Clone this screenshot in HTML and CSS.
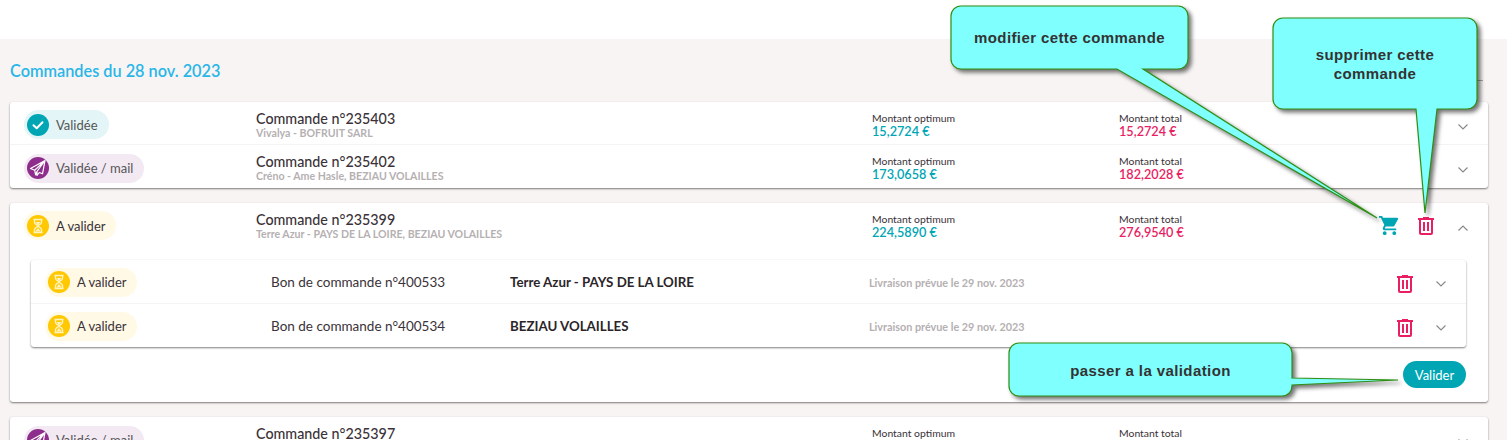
FILE: index.html
```html
<!DOCTYPE html>
<html lang="fr">
<head>
    <meta charset="UTF-8">
    <title>Commandes</title>
    <link rel="stylesheet" href="styles.css">
</head>
<body>
    <svg class="icon-defs" width="0" height="0">
        <symbol id="i-check" viewBox="0 0 22 22"><path d="M6.5 11.2l3.2 3 5.8-6" fill="none" stroke="#fff" stroke-width="2" stroke-linecap="round" stroke-linejoin="round"/></symbol>
        <symbol id="i-plane" viewBox="0 0 22 22"><path d="M18 3.5L3.5 11.5l4.2 1.7L18 3.5l-8 11v4l2.3-3 3.2 1.3L18 3.5zM7.7 13.2l.9 4.6 1.4-3.3" fill="none" stroke="#fff" stroke-width="1.2" stroke-linejoin="round"/></symbol>
        <symbol id="i-hourglass" viewBox="0 0 22 22"><path d="M6.5 4.5h9M6.5 17.5h9M7.5 5v2.5c0 2 3.5 2.5 3.5 3.5s-3.5 1.5-3.5 3.5V17M14.5 5v2.5c0 2-3.500 2.500-3.500 3.500s3.500 1.500 3.500 3.500V17" fill="none" stroke="#fff3c0" stroke-width="1.400"/><path d="M8.500 7h5l-2.500 3.200zM8.200 16.500l2.800-3.500 2.800 3.500z" fill="#fff3c0"/></symbol>
        <symbol id="i-cart" viewBox="0 0 24 24"><path d="M17,18C15.89,18 15,18.89 15,20A2,2 0 0,0 17,22A2,2 0 0,0 19,20C19,18.89 18.1,18 17,18M1,2V4H3L6.6,11.59L5.24,14.04C5.09,14.32 5,14.65 5,15A2,2 0 0,0 7,17H19V15H7.42A0.25,0.25 0 0,1 7.17,14.75C7.17,14.7 7.18,14.66 7.2,14.63L8.1,13H15.55C16.3,13 16.96,12.58 17.3,11.97L20.88,5.5C20.95,5.34 21,5.17 21,5A1,1 0 0,0 20,4H5.21L4.27,2M7,18C5.89,18 5,18.89 5,20A2,2 0 0,0 7,22A2,2 0 0,0 9,20C9,18.89 8.1,18 7,18Z"/></symbol>
        <symbol id="i-trash" viewBox="0 0 24 24"><path d="M9,3V4H4V6H5V19A2,2 0 0,0 7,21H17A2,2 0 0,0 19,19V6H20V4H15V3H9M7,6H17V19H7V6M9,8V17H11V8H9M13,8V17H15V8H13Z"/></symbol>
        <symbol id="i-down" viewBox="0 0 12 8"><path d="M1.500 1.500L6 6l4.500-4.500" fill="none" stroke="#8a8a8a" stroke-width="1.200"/></symbol>
        <symbol id="i-up" viewBox="0 0 12 8"><path d="M1.500 6.500L6 2l4.500 4.500" fill="none" stroke="#8a8a8a" stroke-width="1.200"/></symbol>
    </svg>

    <div class="topbar"></div>

    <main class="content">
        <div class="title-row">
            <h1>Commandes du 28 nov. 2023</h1>
            <div class="title-tools"></div>
        </div>

        <section class="card">
            <div class="row">
                <div class="badge badge-ok"><span class="dot"><svg><use href="#i-check"/></svg></span>Validée</div>
                <div class="order"><strong>Commande n°235403</strong><small>Vivalya - BOFRUIT SARL</small></div>
                <div class="amount"><span>Montant optimum</span><b class="teal">15,2724 €</b></div>
                <div class="amount"><span>Montant total</span><b class="pink">15,2724 €</b></div>
                <div class="actions"><svg class="chevron"><use href="#i-down"/></svg></div>
            </div>
            <div class="row">
                <div class="badge badge-mail"><span class="dot"><svg><use href="#i-plane"/></svg></span>Validée / mail</div>
                <div class="order"><strong>Commande n°235402</strong><small>Créno - Ame Hasle, BEZIAU VOLAILLES</small></div>
                <div class="amount"><span>Montant optimum</span><b class="teal">173,0658 €</b></div>
                <div class="amount"><span>Montant total</span><b class="pink">182,2028 €</b></div>
                <div class="actions"><svg class="chevron"><use href="#i-down"/></svg></div>
            </div>
        </section>

        <section class="card">
            <div class="row row-open">
                <div class="badge badge-wait"><span class="dot"><svg><use href="#i-hourglass"/></svg></span>A valider</div>
                <div class="order"><strong>Commande n°235399</strong><small>Terre Azur - PAYS DE LA LOIRE, BEZIAU VOLAILLES</small></div>
                <div class="amount"><span>Montant optimum</span><b class="teal">224,5890 €</b></div>
                <div class="amount"><span>Montant total</span><b class="pink">276,9540 €</b></div>
                <div class="actions">
                    <svg class="icon-cart"><use href="#i-cart"/></svg>
                    <svg class="icon-trash"><use href="#i-trash"/></svg>
                    <svg class="chevron"><use href="#i-up"/></svg>
                </div>
            </div>

            <div class="subcard">
                <div class="subrow">
                    <div class="badge badge-wait"><span class="dot"><svg><use href="#i-hourglass"/></svg></span>A valider</div>
                    <div class="bon">Bon de commande n°400533</div>
                    <div class="supplier">Terre Azur - PAYS DE LA LOIRE</div>
                    <div class="delivery">Livraison prévue le 29 nov. 2023</div>
                    <svg class="icon-trash"><use href="#i-trash"/></svg>
                    <svg class="chevron"><use href="#i-down"/></svg>
                </div>
                <div class="subrow">
                    <div class="badge badge-wait"><span class="dot"><svg><use href="#i-hourglass"/></svg></span>A valider</div>
                    <div class="bon">Bon de commande n°400534</div>
                    <div class="supplier">BEZIAU VOLAILLES</div>
                    <div class="delivery">Livraison prévue le 29 nov. 2023</div>
                    <svg class="icon-trash"><use href="#i-trash"/></svg>
                    <svg class="chevron"><use href="#i-down"/></svg>
                </div>
            </div>

            <div class="card-footer">
                <button class="btn" type="button">Valider</button>
            </div>
        </section>

        <section class="card">
            <div class="row">
                <div class="badge badge-mail"><span class="dot"><svg><use href="#i-plane"/></svg></span>Validée / mail</div>
                <div class="order"><strong>Commande n°235397</strong><small>&nbsp;</small></div>
                <div class="amount"><span>Montant optimum</span><b class="teal">&nbsp;</b></div>
                <div class="amount"><span>Montant total</span><b class="pink">&nbsp;</b></div>
                <div class="actions"><svg class="chevron"><use href="#i-down"/></svg></div>
            </div>
        </section>
    </main>

    <!-- Annotations posees sur la capture -->
    <svg class="callouts" width="1507" height="440">
        <path d="M961 6H1178a10 10 0 0 1 10 10V59a10 10 0 0 1-10 10H1143L1377 218L1117 69H961a10 10 0 0 1-10-10V16a10 10 0 0 1 10-10Z"/>
        <path d="M1283 18H1467a10 10 0 0 1 10 10V99a10 10 0 0 1-10 10H1437L1425 213L1416 109H1283a10 10 0 0 1-10-10V28a10 10 0 0 1 10-10Z"/>
        <path d="M1019 343H1282a10 10 0 0 1 10 10V378L1398 380L1292 385V386a10 10 0 0 1-10 10H1019a10 10 0 0 1-10-10V353a10 10 0 0 1 10-10Z"/>
    </svg>
    <div class="callout-text callout-edit">modifier cette commande</div>
    <div class="callout-text callout-delete">supprimer cette commande</div>
    <div class="callout-text callout-validate">passer a la validation</div>
</body>
</html>
```

FILE: styles.css
```css
:root {
    --teal: #00a6b4;
    --pink: #e91e63;
    --text: #3a3238;
    --muted: #b5b0b2;
    --bg: #f7f4f3;
}

* {
    margin: 0;
    padding: 0;
    box-sizing: border-box;
}

html, body {
    height: 440px;
    overflow: hidden;
}

body {
    font-family: 'Lato', sans-serif;
    color: var(--text);
    background-color: var(--bg);
    position: relative;
}

.icon-defs {
    position: absolute;
}

.topbar {
    height: 39px;
    background-color: #fff;
}

.content {
    padding: 0 19px 0 10px;
}

/* Titre */
.title-row {
    height: 63px;
    display: flex;
    align-items: center;
    justify-content: space-between;
}

.title-row h1 {
    font-size: 16.3px;
    font-weight: 600;
    color: #29b6e8;
}

.title-tools {
    width: 30px;
    height: 42px;
    margin-right: 5px;
    align-self: flex-start;
    border-bottom: 1px solid #aaa;
}

/* Cartes */
.card {
    background-color: #fff;
    border-radius: 3px;
    box-shadow: 0 1px 2px rgba(0, 0, 0, 0.5);
    margin-bottom: 15px;
}

.row {
    height: 43px;
    padding: 3px 0 0 14px;
    display: grid;
    grid-template-columns: 232px 616px 247px 120px 1fr;
    align-items: center;
    border-bottom: 1px solid #f5f3f3;
}

.row:last-child {
    border-bottom: none;
}

.row-open {
    height: 57px;
    padding-bottom: 15px;
    border-bottom: none;
}

/* Badges de statut */
.badge {
    justify-self: start;
    height: 29px;
    border-radius: 15px;
    padding: 0 11px 0 3px;
    display: inline-flex;
    align-items: center;
    gap: 7px;
    font-size: 13px;
    white-space: nowrap;
}

.dot {
    width: 22px;
    height: 22px;
    border-radius: 50%;
}

.dot svg {
    display: block;
    width: 22px;
    height: 22px;
}

.badge-ok { background-color: #e3f5f6; color: #555; }
.badge-ok .dot { background-color: var(--teal); }
.badge-mail { background-color: #f3e9f3; color: #555; }
.badge-mail .dot { background-color: #8e2d8c; }
.badge-wait { background-color: #fff9e6; width: 92px; }
.badge-wait .dot { background-color: #ffc800; }

.order strong {
    display: block;
    font-size: 14.3px;
    font-weight: 500;
    line-height: 16px;
}

.order small {
    display: block;
    font-size: 10.6px;
    font-weight: 700;
    line-height: 12px;
    color: var(--muted);
}

.amount span {
    display: block;
    font-size: 10.4px;
    line-height: 12px;
}

.amount b {
    display: block;
    font-size: 12.7px;
    font-weight: 600;
    line-height: 14px;
}

.teal { color: var(--teal); }
.pink { color: var(--pink); }

/* Icones d'action */
.actions {
    display: flex;
    align-items: center;
    justify-content: flex-end;
    padding-right: 19px;
}

.chevron {
    width: 12px;
    height: 8px;
    margin-top: 4px;
}

.icon-cart {
    width: 23px;
    height: 23px;
    fill: var(--teal);
    margin-right: 13px;
}

.icon-trash {
    width: 24px;
    height: 24px;
    fill: var(--pink);
    margin-right: 19px;
}

/* Bons de commande */
.subcard {
    margin: 0 22px 0 21px;
    border-radius: 3px;
    box-shadow: 0 1px 2px rgba(0, 0, 0, 0.5);
}

.subrow {
    height: 43.5px;
    padding: 2px 19px 0 14px;
    display: flex;
    align-items: center;
    border-bottom: 1px solid #f5f3f3;
}

.subrow:last-child {
    border-bottom: none;
}

.subrow .badge {
    flex: 0 0 auto;
    margin-right: 134px;
}

.bon {
    width: 239px;
    font-size: 13.5px;
}

.supplier {
    width: 359px;
    font-size: 13.3px;
    font-weight: 700;
    color: #2b2529;
}

.delivery {
    flex: 1;
    font-size: 10.8px;
    font-weight: 700;
    color: var(--muted);
}

.subrow .icon-trash {
    margin: 3px 18px 0 0;
}

.card-footer {
    height: 55px;
    padding: 14px 22px 0 0;
    display: flex;
    justify-content: flex-end;
    align-items: flex-start;
}

.btn {
    width: 63px;
    height: 27px;
    border: none;
    border-radius: 14px;
    background-color: var(--teal);
    color: #fff;
    font-family: inherit;
    font-size: 13px;
}

/* Annotations */
.callouts {
    position: absolute;
    top: 0;
    left: 0;
    fill: #80ffff;
    stroke: #2f8f12;
    stroke-width: 1.2;
    filter: drop-shadow(3px 3px 2px rgba(0, 0, 0, 0.55));
    pointer-events: none;
}

.callout-text {
    position: absolute;
    font-family: 'Liberation Sans', sans-serif;
    font-size: 15px;
    font-weight: 700;
    line-height: 19px;
    letter-spacing: 0.4px;
    text-align: center;
    color: #333;
}

.callout-edit { left: 951px; top: 28px; width: 237px; }
.callout-delete { left: 1293px; top: 45px; width: 164px; }
.callout-validate { left: 1009px; top: 361px; width: 283px; }
```
